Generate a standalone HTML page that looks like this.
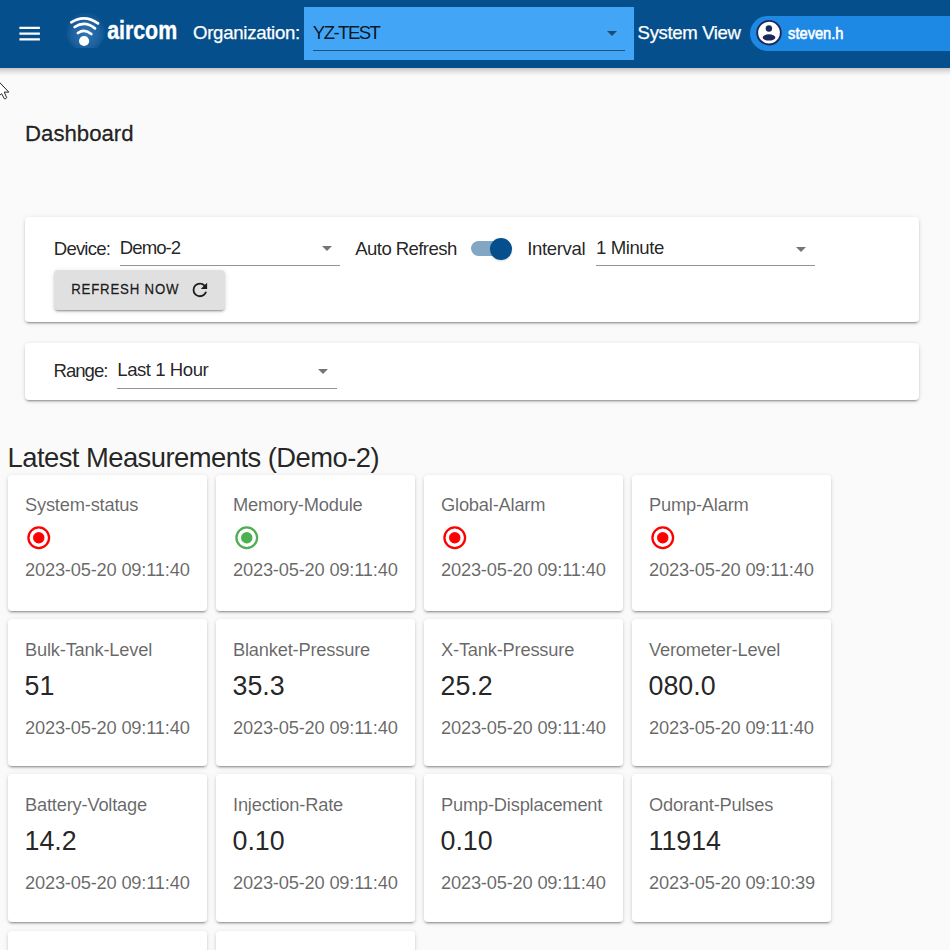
<!DOCTYPE html>
<html><head><meta charset="utf-8">
<style>
*{box-sizing:border-box;margin:0;padding:0}
html,body{width:950px;height:950px;overflow:hidden;background:#fafafa;font-family:"Liberation Sans",sans-serif;color:rgba(0,0,0,.87)}
.abs{position:absolute}
.tx{position:absolute;white-space:nowrap;line-height:1}
#hdr{position:absolute;left:0;top:0;width:950px;height:68px;background:#054f8c}
#hsh{position:absolute;left:0;top:68px;width:950px;height:8px;background:linear-gradient(rgba(0,0,0,.21),rgba(0,0,0,.13) 30%,rgba(0,0,0,.05) 65%,rgba(0,0,0,0))}
.card{position:absolute;background:#fff;border-radius:4px;box-shadow:0 3px 1px -2px rgba(0,0,0,.2),0 2px 2px 0 rgba(0,0,0,.14),0 1px 5px 0 rgba(0,0,0,.12)}
.uline{position:absolute;height:1px;background:rgba(0,0,0,.42)}
.arrow{position:absolute;width:0;height:0;border-left:5.5px solid transparent;border-right:5.5px solid transparent;border-top:5.5px solid rgba(0,0,0,.54)}
.m{position:absolute;width:199px;background:#fff;border-radius:4px;box-shadow:0 3px 1px -2px rgba(0,0,0,.2),0 2px 2px 0 rgba(0,0,0,.14),0 1px 5px 0 rgba(0,0,0,.12)}
.t,.d{font-size:18.3px;color:rgba(0,0,0,.6);letter-spacing:-0.2px}
.v{font-size:26.8px;color:rgba(0,0,0,.87)}
.ic{position:absolute}
</style></head><body>

<div id="hdr"></div><div id="hsh"></div>
<svg class="ic" style="left:16px;top:19.5px" width="27.3" height="27.3" viewBox="0 0 24 24"><path fill="#fff" d="M3,6H21V8H3V6M3,11H21V13H3V11M3,16H21V18H3V16Z"/></svg>
<svg class="ic" style="left:60px;top:10px" width="50" height="50" viewBox="60 10 50 50">
 <defs><radialGradient id="gl" cx="0.5" cy="0.55" r="0.5"><stop offset="0" stop-color="#3d80c2" stop-opacity=".8"/><stop offset=".7" stop-color="#2e6dab" stop-opacity=".6"/><stop offset="1" stop-color="#2a66a3" stop-opacity=".25"/></radialGradient>
 <clipPath id="gc"><rect x="60" y="10" width="50" height="38"/></clipPath></defs>
 <circle cx="85.7" cy="32" r="19.2" fill="url(#gl)" clip-path="url(#gc)"/>
 <path d="M71.3,22.3 Q84.6,13.75 98,23.4" stroke="#fff" stroke-width="2.7" fill="none" stroke-linecap="round"/>
 <path d="M74.7,27 Q84.8,20.1 95,28.4" stroke="#fff" stroke-width="2.7" fill="none" stroke-linecap="round"/>
 <path d="M77.9,33 Q84.6,28.15 91.3,34.1" stroke="#fff" stroke-width="2.7" fill="none" stroke-linecap="round"/>
 <circle cx="84.1" cy="41" r="5.1" fill="#fff"/>
</svg>
<div class="abs" style="left:304px;top:7px;width:330px;height:53px;background:#42a5f5"></div>
<div class="uline" style="left:313px;top:50px;width:312px;background:rgba(0,0,0,.5)"></div>
<div class="arrow" style="left:606.5px;top:30.5px"></div>
<div class="abs" style="left:750px;top:16px;width:220px;height:35px;background:#1e88e5;border-radius:17.5px"></div>
<svg class="ic" style="left:752px;top:17px" width="34" height="32" viewBox="752 17 34 32">
 <circle cx="769" cy="32.65" r="11.8" fill="#fff" stroke="#1b2a5c" stroke-width="1.9"/>
 <circle cx="768.9" cy="28.45" r="3.2" fill="#1b2a5c"/>
 <ellipse cx="769" cy="37.4" rx="6.3" ry="3.2" fill="#1b2a5c"/>
</svg>

<svg class="ic" style="left:0;top:74px" width="20" height="30" viewBox="0 74 20 30"><path d="M-6,76.6 L8.8,92.1 L4.2,92.1 L6.7,97.6 Q6,99.2 4.4,98.8 L1.6,93.6 L-3,98 Z" fill="#fff" stroke="#2a2520" stroke-width="1" stroke-linejoin="miter"/></svg>
<div class="card" style="left:25px;top:217px;width:894px;height:105px"></div>
<div class="card" style="left:25px;top:343px;width:894px;height:57px"></div>
<div class="uline" style="left:120px;top:265px;width:219.5px"></div>
<div class="arrow" style="left:321.5px;top:246px"></div>
<div class="abs" style="left:471px;top:241px;width:36px;height:15px;border-radius:7.5px;background:#054f8c;opacity:.5"></div>
<div class="abs" style="left:490px;top:238px;width:22px;height:22px;border-radius:50%;background:#054f8c;box-shadow:0 1px 2px rgba(0,0,0,.15)"></div>
<div class="uline" style="left:595.5px;top:265px;width:219px"></div>
<div class="arrow" style="left:796px;top:246.5px"></div>
<div class="abs" style="left:54px;top:270px;width:171px;height:40px;border-radius:4px;background:#e0e0e0;box-shadow:0 3px 1px -2px rgba(0,0,0,.2),0 2px 2px 0 rgba(0,0,0,.14),0 1px 5px 0 rgba(0,0,0,.12)"></div>
<svg class="ic" style="left:189px;top:278.7px" width="21.75" height="21.75" viewBox="0 0 24 24"><path fill="rgba(0,0,0,.87)" d="M17.65,6.35C16.2,4.9 14.21,4 12,4A8,8 0 0,0 4,12A8,8 0 0,0 12,20C15.73,20 18.84,17.45 19.73,14H17.65C16.83,16.33 14.61,18 12,18A6,6 0 0,1 6,12A6,6 0 0,1 12,6C13.66,6 15.14,6.69 16.22,7.78L13,11H20V4L17.65,6.35Z"/></svg>
<div class="uline" style="left:117px;top:387.5px;width:220px"></div>
<div class="arrow" style="left:318px;top:369px"></div>
<div class="m" style="left:8px;top:475px;height:135.5px"></div>
<span class="tx t" style="left:25px;top:496.05px">System-status</span>
<svg class="ic" style="left:24.75px;top:524.05px" width="27.5" height="27.5" viewBox="0 0 24 24"><path fill="#ff0000" d="M12,20A8,8 0 0,1 4,12A8,8 0 0,1 12,4A8,8 0 0,1 20,12A8,8 0 0,1 12,20M12,2A10,10 0 0,0 2,12A10,10 0 0,0 12,22A10,10 0 0,0 22,12A10,10 0 0,0 12,2M12,7A5,5 0 0,0 7,12A5,5 0 0,0 12,17A5,5 0 0,0 17,12A5,5 0 0,0 12,7Z"/></svg>
<span class="tx d" style="left:25px;top:561.15px">2023-05-20 09:11:40</span>
<div class="m" style="left:216px;top:475px;height:135.5px"></div>
<span class="tx t" style="left:233px;top:496.05px">Memory-Module</span>
<svg class="ic" style="left:232.75px;top:524.05px" width="27.5" height="27.5" viewBox="0 0 24 24"><path fill="#4caf50" d="M12,20A8,8 0 0,1 4,12A8,8 0 0,1 12,4A8,8 0 0,1 20,12A8,8 0 0,1 12,20M12,2A10,10 0 0,0 2,12A10,10 0 0,0 12,22A10,10 0 0,0 22,12A10,10 0 0,0 12,2M12,7A5,5 0 0,0 7,12A5,5 0 0,0 12,17A5,5 0 0,0 17,12A5,5 0 0,0 12,7Z"/></svg>
<span class="tx d" style="left:233px;top:561.15px">2023-05-20 09:11:40</span>
<div class="m" style="left:424px;top:475px;height:135.5px"></div>
<span class="tx t" style="left:441px;top:496.05px">Global-Alarm</span>
<svg class="ic" style="left:440.75px;top:524.05px" width="27.5" height="27.5" viewBox="0 0 24 24"><path fill="#ff0000" d="M12,20A8,8 0 0,1 4,12A8,8 0 0,1 12,4A8,8 0 0,1 20,12A8,8 0 0,1 12,20M12,2A10,10 0 0,0 2,12A10,10 0 0,0 12,22A10,10 0 0,0 22,12A10,10 0 0,0 12,2M12,7A5,5 0 0,0 7,12A5,5 0 0,0 12,17A5,5 0 0,0 17,12A5,5 0 0,0 12,7Z"/></svg>
<span class="tx d" style="left:441px;top:561.15px">2023-05-20 09:11:40</span>
<div class="m" style="left:632px;top:475px;height:135.5px"></div>
<span class="tx t" style="left:649px;top:496.05px">Pump-Alarm</span>
<svg class="ic" style="left:648.75px;top:524.05px" width="27.5" height="27.5" viewBox="0 0 24 24"><path fill="#ff0000" d="M12,20A8,8 0 0,1 4,12A8,8 0 0,1 12,4A8,8 0 0,1 20,12A8,8 0 0,1 12,20M12,2A10,10 0 0,0 2,12A10,10 0 0,0 12,22A10,10 0 0,0 22,12A10,10 0 0,0 12,2M12,7A5,5 0 0,0 7,12A5,5 0 0,0 12,17A5,5 0 0,0 17,12A5,5 0 0,0 12,7Z"/></svg>
<span class="tx d" style="left:649px;top:561.15px">2023-05-20 09:11:40</span>
<div class="m" style="left:8px;top:619px;height:147px"></div>
<span class="tx t" style="left:25px;top:641.35px">Bulk-Tank-Level</span>
<span class="tx v" style="left:24.5px;top:673.12px">51</span>
<span class="tx d" style="left:25px;top:718.65px">2023-05-20 09:11:40</span>
<div class="m" style="left:216px;top:619px;height:147px"></div>
<span class="tx t" style="left:233px;top:641.35px">Blanket-Pressure</span>
<span class="tx v" style="left:232.5px;top:673.12px">35.3</span>
<span class="tx d" style="left:233px;top:718.65px">2023-05-20 09:11:40</span>
<div class="m" style="left:424px;top:619px;height:147px"></div>
<span class="tx t" style="left:441px;top:641.35px">X-Tank-Pressure</span>
<span class="tx v" style="left:440.5px;top:673.12px">25.2</span>
<span class="tx d" style="left:441px;top:718.65px">2023-05-20 09:11:40</span>
<div class="m" style="left:632px;top:619px;height:147px"></div>
<span class="tx t" style="left:649px;top:641.35px">Verometer-Level</span>
<span class="tx v" style="left:648.5px;top:673.12px">080.0</span>
<span class="tx d" style="left:649px;top:718.65px">2023-05-20 09:11:40</span>
<div class="m" style="left:8px;top:774px;height:148px"></div>
<span class="tx t" style="left:25px;top:796.35px">Battery-Voltage</span>
<span class="tx v" style="left:24.5px;top:828.12px">14.2</span>
<span class="tx d" style="left:25px;top:873.65px">2023-05-20 09:11:40</span>
<div class="m" style="left:216px;top:774px;height:148px"></div>
<span class="tx t" style="left:233px;top:796.35px">Injection-Rate</span>
<span class="tx v" style="left:232.5px;top:828.12px">0.10</span>
<span class="tx d" style="left:233px;top:873.65px">2023-05-20 09:11:40</span>
<div class="m" style="left:424px;top:774px;height:148px"></div>
<span class="tx t" style="left:441px;top:796.35px">Pump-Displacement</span>
<span class="tx v" style="left:440.5px;top:828.12px">0.10</span>
<span class="tx d" style="left:441px;top:873.65px">2023-05-20 09:11:40</span>
<div class="m" style="left:632px;top:774px;height:148px"></div>
<span class="tx t" style="left:649px;top:796.35px">Odorant-Pulses</span>
<span class="tx v" style="left:648.5px;top:828.12px">11914</span>
<span class="tx d" style="left:649px;top:873.65px">2023-05-20 09:10:39</span>
<div class="m" style="left:8px;top:931px;height:60px"></div>
<div class="m" style="left:216px;top:931px;height:60px"></div>
<span class="tx" style="left:107.3px;top:17.72px;font-size:25.5px;color:#fff;transform:scaleX(0.8366);transform-origin:1px 0;font-weight:700;-webkit-text-stroke:0.4px #fff">aircom</span>
<span class="tx" style="left:193px;top:23.79px;font-size:18.6px;letter-spacing:-0.28px;color:#fff;-webkit-text-stroke:0.25px #fff">Organization:</span>
<span class="tx" style="left:312.8px;top:23.79px;font-size:18.6px;letter-spacing:-1.55px;color:rgba(0,0,0,.87)">YZ-TEST</span>
<span class="tx" style="left:637.6px;top:23.59px;font-size:18.6px;letter-spacing:-0.37px;color:#fff;-webkit-text-stroke:0.25px #fff">System View</span>
<span class="tx" style="left:787.6px;top:24.63px;font-size:16.2px;color:#fff;transform:scaleX(0.9050);transform-origin:1px 0;-webkit-text-stroke:0.6px #fff">steven.h</span>
<span class="tx" style="left:24.6px;top:122.2px;font-size:22.7px;color:rgba(0,0,0,.87);transform:scaleX(0.9778);transform-origin:2px 0;-webkit-text-stroke:0.3px rgba(0,0,0,.87)">Dashboard</span>
<span class="tx" style="left:53.8px;top:239.89px;font-size:18.6px;letter-spacing:-0.83px;color:rgba(0,0,0,.87)">Device:</span>
<span class="tx" style="left:119.8px;top:239.09px;font-size:18.6px;letter-spacing:-0.96px;color:rgba(0,0,0,.87)">Demo-2</span>
<span class="tx" style="left:355.3px;top:240.09px;font-size:18.6px;letter-spacing:-0.6px;color:rgba(0,0,0,.87)">Auto Refresh</span>
<span class="tx" style="left:527.2px;top:239.79px;font-size:18.6px;letter-spacing:-0.36px;color:rgba(0,0,0,.87)">Interval</span>
<span class="tx" style="left:596.1px;top:238.69px;font-size:18.6px;letter-spacing:-0.44px;color:rgba(0,0,0,.87)">1 Minute</span>
<span class="tx" style="left:71px;top:280.81px;font-size:15.4px;letter-spacing:0.94px;color:rgba(0,0,0,.87);transform:scaleX(0.8600);transform-origin:1px 0;-webkit-text-stroke:0.3px rgba(0,0,0,.87)">REFRESH NOW</span>
<span class="tx" style="left:53.5px;top:361.89px;font-size:18.6px;letter-spacing:-1px;color:rgba(0,0,0,.87)">Range:</span>
<span class="tx" style="left:117.3px;top:361.09px;font-size:18.6px;letter-spacing:-0.47px;color:rgba(0,0,0,.87)">Last 1 Hour</span>
<span class="tx" style="left:7.5px;top:443.51px;font-size:27.4px;letter-spacing:-0.54px;color:rgba(0,0,0,.87)">Latest Measurements (Demo-2)</span>
</body></html>
